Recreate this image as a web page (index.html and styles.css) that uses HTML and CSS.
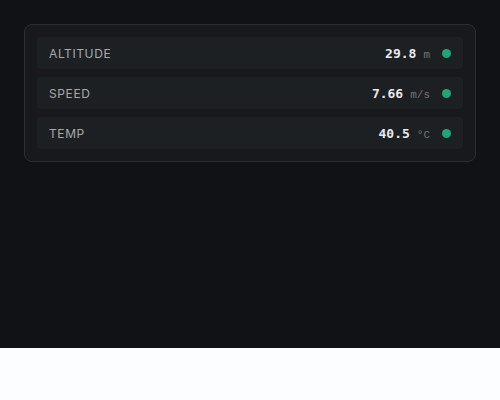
FILE: index.html
```html
<!DOCTYPE html>
<html lang="en">
<head>
<meta charset="utf-8">
<title>Telemetry</title>
<link rel="stylesheet" href="styles.css">
</head>
<body>
<main class="app">
  <section class="panel">
    <div class="row">
      <span class="label">ALTITUDE</span>
      <span class="reading"><span class="value">29.8</span><span class="unit">m</span></span>
      <span class="dot"></span>
    </div>
    <div class="row">
      <span class="label">SPEED</span>
      <span class="reading"><span class="value">7.66</span><span class="unit">m/s</span></span>
      <span class="dot"></span>
    </div>
    <div class="row">
      <span class="label">TEMP</span>
      <span class="reading"><span class="value">40.5</span><span class="unit">°C</span></span>
      <span class="dot"></span>
    </div>
  </section>
</main>
</body>
</html>
```

FILE: styles.css
```css
html, body {
  margin: 0;
  padding: 0;
  background: #fcfdfe;
}

.app {
  box-sizing: border-box;
  height: 348px;
  padding: 24px;
  background: #111215;
  font-family: Inter, "Liberation Sans", sans-serif;
}

.panel {
  display: flex;
  flex-direction: column;
  gap: 8px;
  padding: 12px;
  background: #17191c;
  border: 1px solid #2b2e32;
  border-radius: 8px;
}

.row {
  display: flex;
  align-items: center;
  height: 32px;
  padding: 0 12px;
  background: #1d2023;
  border-radius: 4px;
}

.label {
  flex: 1;
  font-size: 12px;
  letter-spacing: 0.05em;
  color: #a7a9ac;
}

.reading {
  display: flex;
  align-items: baseline;
  gap: 7px;
}

.value {
  font-family: "DejaVu Sans Mono", "Liberation Mono", monospace;
  font-size: 13px;
  font-weight: bold;
  color: #e9eaec;
}

.unit {
  font-family: "Liberation Mono", "DejaVu Sans Mono", monospace;
  font-size: 11px;
  color: #707478;
}

.dot {
  width: 9px;
  height: 9px;
  margin-left: 12px;
  border-radius: 50%;
  background: #22a477;
}
```
